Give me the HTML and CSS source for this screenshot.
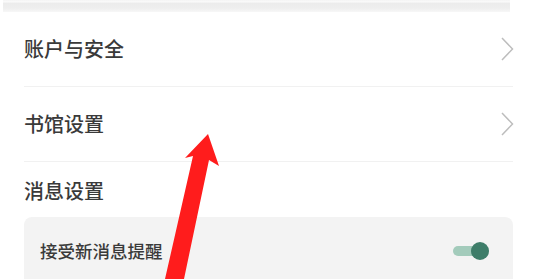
FILE: index.html
```html
<!DOCTYPE html>
<html lang="zh">
<head>
<meta charset="utf-8">
<link rel="stylesheet" href="styles.css">
</head>
<body>
<div class="page">
  <div class="topbar"></div>
  <div class="list">
    <div class="row">
      <span class="label">账户与安全</span>
      <svg class="chev" width="14" height="26" viewBox="0 0 14 26"><path d="M2 2 L12.5 13 L2 24" fill="none" stroke="#bdbdbd" stroke-width="1.5"/></svg>
    </div>
    <div class="row">
      <span class="label">书馆设置</span>
      <svg class="chev" width="14" height="26" viewBox="0 0 14 26"><path d="M2 2 L12.5 13 L2 24" fill="none" stroke="#bdbdbd" stroke-width="1.5"/></svg>
    </div>
    <div class="section">消息设置</div>
    <div class="card">
      <div class="card-row">
        <span class="card-label">接受新消息提醒</span>
        <span class="toggle"><span class="track"></span><span class="knob"></span></span>
      </div>
    </div>
  </div>
  <svg class="arrow" width="550" height="279" viewBox="0 0 550 279">
    <polygon points="208,134 185,158 193,156 165,279 184,279 209,160 219,166" fill="#ff1c1c"/>
  </svg>
</div>
</body>
</html>
```
FILE: styles.css
```css
html, body {
  margin: 0;
  padding: 0;
  background: #ffffff;
}
.page {
  position: relative;
  width: 550px;
  height: 279px;
  overflow: hidden;
  font-family: "Noto Sans CJK SC", "Noto Sans", sans-serif;
  color: #3a3a3a;
}
.topbar {
  height: 12px;
  margin: 0 40px 0 3px;
  background: linear-gradient(#f4f4f4 0, #fbfbfb 2px, #ececec 3px, #eeeeee 8px, #f7f7f7 12px);
}
.list {
  padding: 0 37px 0 24px;
}
.row {
  height: 74px;
  display: flex;
  align-items: center;
  justify-content: space-between;
  border-bottom: 1px solid #f1f1f1;
}
.label {
  font-size: 20px;
  line-height: 24px;
  font-weight: 500;
}
.chev {
  display: block;
  margin-right: -1px;
}
.section {
  font-size: 20px;
  line-height: 24px;
  font-weight: 500;
  padding: 17px 0 14px 0;
}
.card {
  background: #f3f3f3;
  border-radius: 8px;
  height: 80px;
}
.card-row {
  height: 68px;
  display: flex;
  align-items: center;
  justify-content: space-between;
  padding: 0 24px 0 16px;
}
.card-label {
  font-size: 17.5px;
  line-height: 22px;
  font-weight: 500;
}
.toggle {
  position: relative;
  width: 36px;
  height: 20px;
  display: flex;
  align-items: center;
}
.track {
  display: block;
  width: 26px;
  height: 10px;
  border-radius: 5px;
  background: #a3cbbb;
}
.knob {
  position: absolute;
  right: 0;
  top: 1px;
  width: 18px;
  height: 18px;
  border-radius: 50%;
  background: #3e7d69;
}
.arrow {
  position: absolute;
  left: 0;
  top: 0;
}
```
